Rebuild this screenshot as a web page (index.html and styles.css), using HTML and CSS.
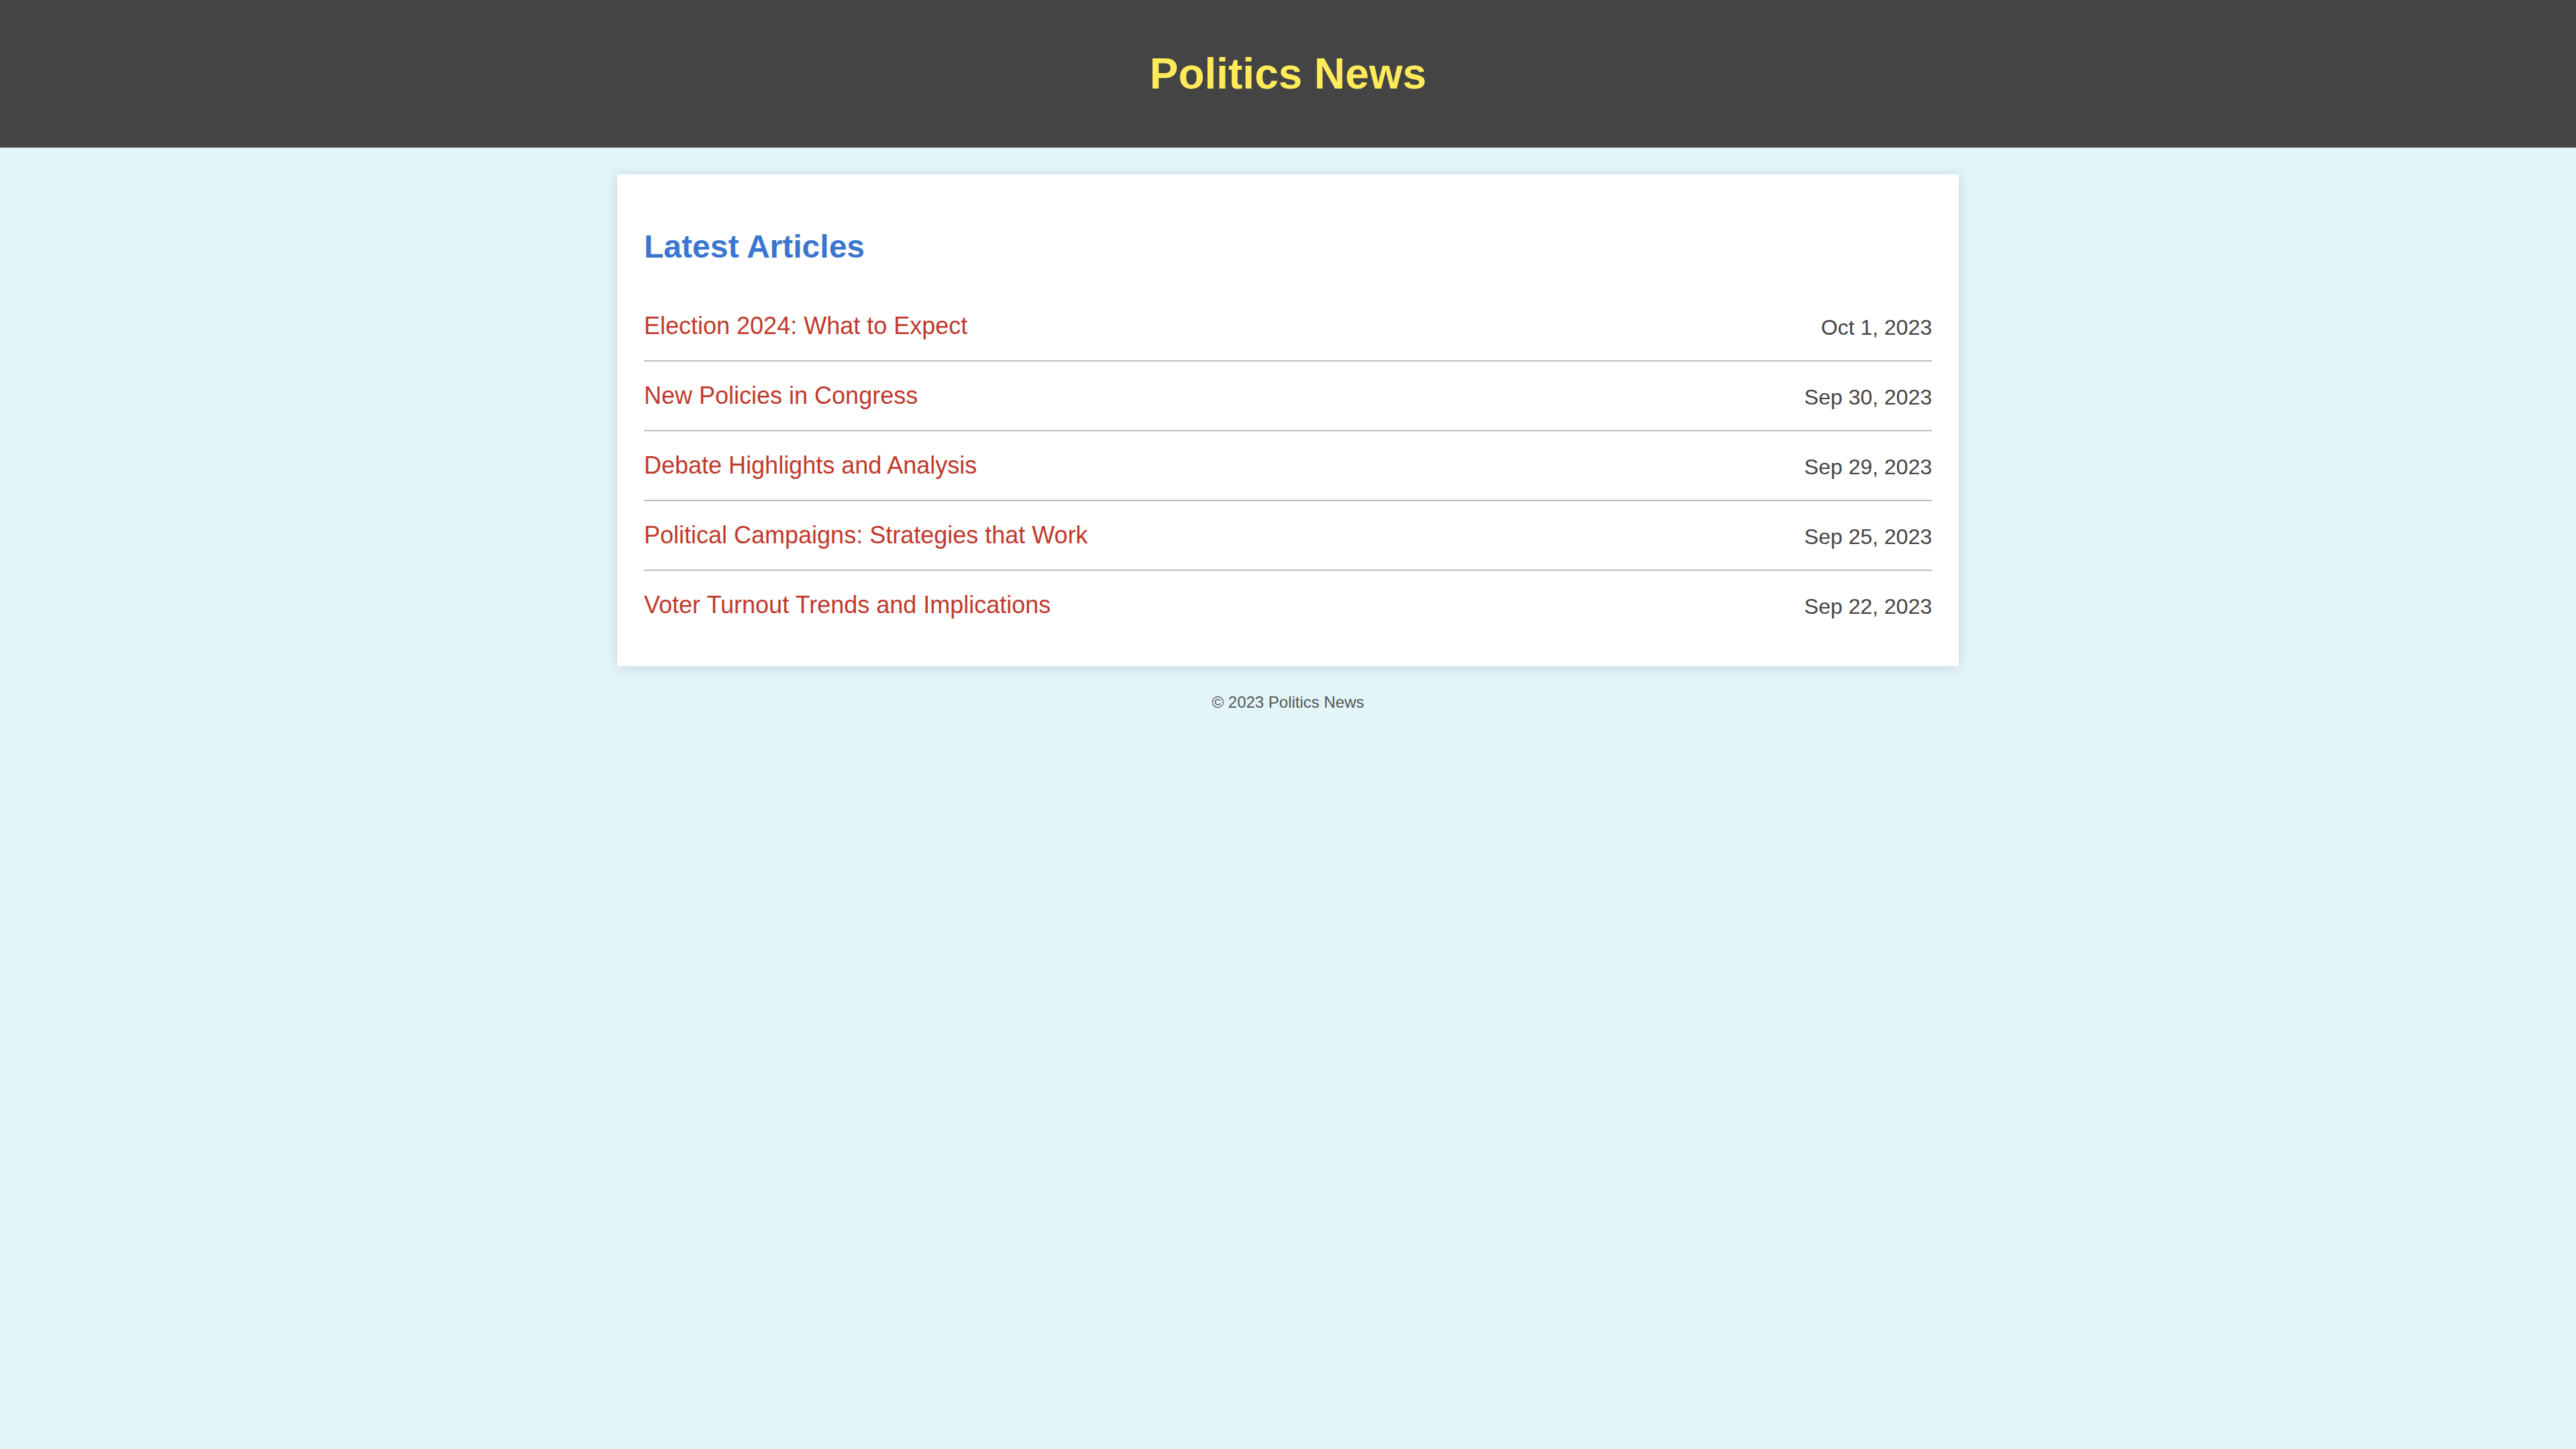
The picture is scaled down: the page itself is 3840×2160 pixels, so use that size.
FILE: index.html
```html
<!DOCTYPE html>
<html lang="en">
<head>
<meta charset="utf-8">
<title>Politics News</title>
<link rel="stylesheet" href="styles.css">
</head>
<body>
<header class="site-header">
  <h1 class="site-title">Politics News</h1>
</header>
<main class="card">
  <h2 class="card-title">Latest Articles</h2>
  <ul class="articles">
    <li class="article"><a class="article-link" href="#">Election 2024: What to Expect</a><span class="article-date">Oct 1, 2023</span></li>
    <li class="article"><a class="article-link" href="#">New Policies in Congress</a><span class="article-date">Sep 30, 2023</span></li>
    <li class="article"><a class="article-link" href="#">Debate Highlights and Analysis</a><span class="article-date">Sep 29, 2023</span></li>
    <li class="article"><a class="article-link" href="#">Political Campaigns: Strategies that Work</a><span class="article-date">Sep 25, 2023</span></li>
    <li class="article"><a class="article-link" href="#">Voter Turnout Trends and Implications</a><span class="article-date">Sep 22, 2023</span></li>
  </ul>
</main>
<footer class="site-footer">&copy; 2023 Politics News</footer>
</body>
</html>
```

FILE: styles.css
```css
html, body {
  margin: 0;
  padding: 0;
}
body {
  font-family: "Liberation Sans", Arial, sans-serif;
  background: #e2f5f9;
  min-height: 2160px;
}
.site-header {
  background: #444444;
  padding: 30px 0;
  text-align: center;
}
.site-title {
  margin: 43px 0;
  font-size: 64px;
  font-weight: bold;
  line-height: normal;
  color: #ffeb5a;
}
.card {
  display: block;
  width: 2000px;
  box-sizing: border-box;
  margin: 40px auto 0;
  padding: 40px;
  background: #ffffff;
  box-shadow: 0 2px 20px rgba(0, 0, 0, 0.13);
}
.card-title {
  margin: 40px 0;
  font-size: 48px;
  font-weight: bold;
  line-height: normal;
  color: #3a75cf;
}
.articles {
  list-style: none;
  margin: 0;
  padding: 0;
}
.article {
  display: flex;
  justify-content: space-between;
  align-items: flex-start;
  padding: 30px 0;
  border-bottom: 2px solid #bbbbbb;
}
.article:last-child {
  border-bottom: none;
}
.article-link {
  font-size: 36px;
  line-height: normal;
  color: #c0392b;
  text-decoration: none;
}
.article-date {
  font-size: 32px;
  line-height: normal;
  padding-top: 5px;
  color: #444444;
}
.site-footer {
  padding: 40px 0;
  text-align: center;
  font-size: 24px;
  color: #555555;
}
```
